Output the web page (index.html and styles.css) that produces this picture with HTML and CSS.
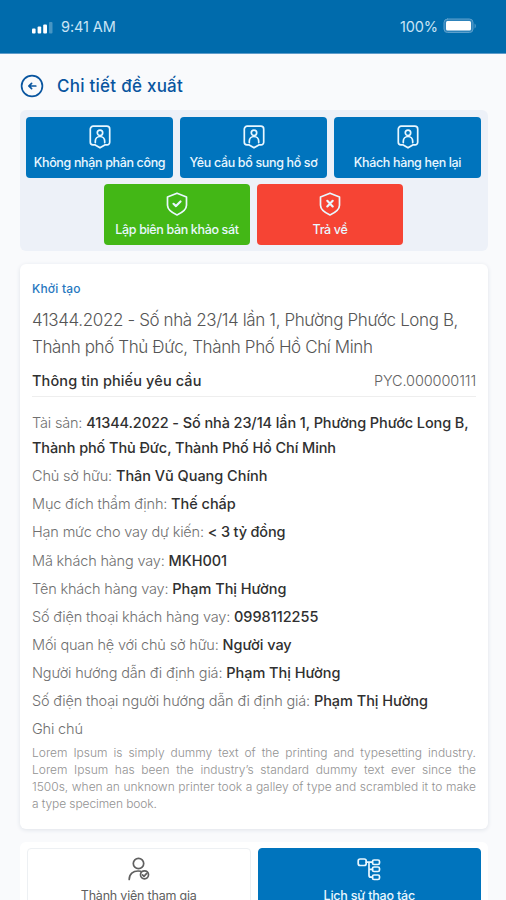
FILE: index.html
```html
<!DOCTYPE html>
<html lang="vi">
<head>
<meta charset="utf-8">
<meta name="viewport" content="width=device-width, initial-scale=1">
<title>Chi tiết đề xuất</title>
<link rel="stylesheet" href="styles.css">
</head>
<body>
<svg class="symbols" aria-hidden="true">
  <symbol id="badge" viewBox="0 0 22 24"><path d="M4.2 1.2h13.6a2.9 2.9 0 0 1 2.9 2.9v13.2a2.6 2.6 0 0 1-2.6 2.6h-2.3L11 22.8 6.200 19.900H3.900a2.600 2.600 0 0 1-2.600-2.600V4.100a2.900 2.900 0 0 1 2.900-2.900z"/><circle cx="11" cy="7.800" r="2.700"/><path d="M6.300 17.600v-1.400a4.700 4.700 0 0 1 9.400 0v1.400"/></symbol>
  <symbol id="shield-check" viewBox="0 0 22 24"><path d="M11 1.200 20.500 5v8.200c0 4.600-4.200 7.300-9.500 9.700-5.300-2.400-9.500-5.100-9.500-9.700V5z"/><path class="heavy" d="m7.500 11.800 2.500 2.300 4.500-4.600"/></symbol>
  <symbol id="shield-x" viewBox="0 0 22 24"><path d="M11 1.200 20.500 5v8.200c0 4.600-4.200 7.300-9.500 9.700-5.300-2.400-9.500-5.100-9.500-9.700V5z"/><path class="heavy" d="m8.300 8.800 5.400 5.600m0-5.600-5.400 5.600"/></symbol>
</svg>
<header class="status">
  <div class="status-group">
    <svg class="signal" viewBox="0 0 21 12"><rect x="0" y="6.500" width="3.600" height="5" rx="1"/><rect x="5.600" y="4.500" width="3.600" height="7" rx="1"/><rect x="11.200" y="2.500" width="3.800" height="9" rx="1"/><rect class="dim" x="17" y="0" width="3.500" height="11.500" rx="1"/></svg>
    <span class="clock">9:41 AM</span>
  </div>
  <div class="status-group">
    <span class="percent">100%</span>
    <svg class="battery" viewBox="0 0 34 16"><rect class="shell" x="1" y="1" width="29" height="13.500" rx="3.500"/><rect x="3" y="3" width="25" height="9.500" rx="1.500"/><path class="dim" d="M31.500 5.500c2 1 2 4 0 5z"/></svg>
  </div>
</header>
<main>
  <div class="page-title">
    <svg class="back" viewBox="0 0 24 24"><circle cx="12" cy="12" r="10.400"/><path d="M15.800 12H9m2.600-2.700L8.800 12l2.800 2.700"/></svg>
    <h1>Chi tiết đề xuất</h1>
  </div>
  <section class="actions">
    <div class="action-row">
      <button class="action"><svg><use href="#badge"/></svg><span>Không nhận phân công</span></button>
      <button class="action"><svg><use href="#badge"/></svg><span>Yêu cầu bổ sung hồ sơ</span></button>
      <button class="action"><svg><use href="#badge"/></svg><span>Khách hàng hẹn lại</span></button>
    </div>
    <div class="action-row">
      <button class="action green"><svg><use href="#shield-check"/></svg><span>Lập biên bản khảo sát</span></button>
      <button class="action red"><svg><use href="#shield-x"/></svg><span>Trả về</span></button>
    </div>
  </section>
  <article class="card">
    <div class="state">Khởi tạo</div>
    <h2>41344.2022 - Số nhà 23/14 lần 1, Phường Phước Long B,<br>Thành phố Thủ Đức, Thành Phố Hồ Chí Minh</h2>
    <div class="request"><strong>Thông tin phiếu yêu cầu</strong><span>PYC.000000111</span></div>
    <div class="details">
      <p>Tài sản: <b class="asset">41344.2022 - Số nhà 23/14 lần 1, Phường Phước Long B,<br>Thành phố Thủ Đức, Thành Phố Hồ Chí Minh</b></p>
      <p>Chủ sở hữu: <b>Thân Vũ Quang Chính</b></p>
      <p>Mục đích thẩm định: <b>Thế chấp</b></p>
      <p>Hạn mức cho vay dự kiến: <b class="amount">&lt; 3 tỷ đồng</b></p>
      <p>Mã khách hàng vay: <b>MKH001</b></p>
      <p>Tên khách hàng vay: <b>Phạm Thị Hường</b></p>
      <p>Số điện thoại khách hàng vay: <b>0998112255</b></p>
      <p>Mối quan hệ với chủ sở hữu: <b>Người vay</b></p>
      <p>Người hướng dẫn đi định giá: <b>Phạm Thị Hường</b></p>
      <p>Số điện thoại người hướng dẫn đi định giá: <b>Phạm Thị Hường</b></p>
      <p>Ghi chú</p>
    </div>
    <div class="note">
      <div>Lorem Ipsum is simply dummy text of the printing and typesetting industry.</div>
      <div>Lorem Ipsum has been the industry’s standard dummy text ever since the</div>
      <div>1500s, when an unknown printer took a galley of type and scrambled it to make</div>
      <div class="last">a type specimen book.</div>
    </div>
  </article>
  <nav class="tabs">
    <button class="tab"><svg viewBox="0 0 22 24"><circle cx="10.500" cy="6.500" r="5.200"/><path d="M1.200 22.500c0-5.500 4-8.500 8.800-8.500 1.100 0 2 .1 2.800.3"/><circle cx="16.500" cy="17.800" r="4"/><path d="m14.500 17.800 1.500 1.500 2.700-2.900"/></svg><span>Thành viên tham gia</span></button>
    <button class="tab active"><svg viewBox="0 0 24 24"><rect x="1.200" y="2" width="8" height="6.500" rx="2"/><rect x="15.500" y="3" width="7" height="4.500" rx="1.500"/><rect x="15.500" y="10" width="7" height="4.500" rx="1.500"/><rect x="15.500" y="18" width="7" height="4.500" rx="1.500"/><path d="M9.200 5.200h6.300M12 5.200v13a2 2 0 0 0 2 2h1.500M12 12.300h3.500"/></svg><span>Lịch sử thao tác</span></button>
  </nav>
</main>
</body>
</html>
```
FILE: styles.css
```css
* { box-sizing: border-box; }
html, body { height: 900px; overflow: hidden; }
body { margin: 0; background: #f9fafc; font-family: Inter, "Noto Sans", sans-serif; color: #636363; }
svg { fill: none; stroke: currentColor; stroke-width: 1.7; stroke-linecap: round; stroke-linejoin: round; flex: none; }
button { font: inherit; border: 0; padding: 0; }
.symbols { position: absolute; width: 0; height: 0; }
.heavy { stroke-width: 2.2; }
.status { height: 54px; background: #006bac; border-bottom: 1px solid #5e9cca; color: #c9e4f5; display: flex; justify-content: space-between; padding: 0 29px 0 32px; font: 400 14.5px/54px Inter, sans-serif; }
.status-group { display: flex; align-items: center; }
.status svg { fill: #fff; stroke: none; }
.status .dim { fill: #4795c3; }
.signal { width: 21px; height: 12px; margin-top: 3px; }
.battery { width: 34px; height: 16px; margin-left: 5px; margin-top: -1px; }
.status .shell { fill: #2d83bb; stroke: #5ca0cc; stroke-width: 1; }
.clock { margin-left: 8px; letter-spacing: -.1px; }
.percent { letter-spacing: -.1px; }
main { padding: 0 18px 0 20px; }
.page-title { height: 56px; display: flex; align-items: center; padding-top: 8px; color: #09559f; }
.back { width: 24px; height: 24px; }
h1 { margin: 0 0 0 13px; font-size: 17px; line-height: 24px; font-weight: 500; letter-spacing: .25px; white-space: nowrap; }
.actions { height: 141px; background: #edf1f8; border-radius: 6px; padding: 7px 7px 7px 6px; display: flex; flex-direction: column; gap: 6px; }
.action-row { display: flex; justify-content: center; gap: 7px; }
.action { width: 147px; height: 61px; background: #0074bd; color: #e9f7ff; border-radius: 4px; display: flex; flex-direction: column; align-items: center; padding-top: 8px; }
.action svg { width: 22px; height: 24px; }
.action span { font-size: 12.500px; line-height: 18px; margin-top: 5px; font-weight: 500; white-space: nowrap; letter-spacing: -.35px; }
.green, .red { width: 146px; }
.green { background: #43b716; }
.red { background: #f64434; }
.card { height: 565px; margin-top: 13px; background: #fff; border-radius: 6px; box-shadow: 0 1px 4px #dfe3e9; padding: 16px 12px 0; white-space: nowrap; }
.state { font-size: 12px; line-height: 18px; font-weight: 500; color: #2878c0; letter-spacing: .2px; }
h2 { margin: 9px 0 0; font-size: 17px; line-height: 27px; font-weight: 300; letter-spacing: -.38px; color: #555; }
.request { height: 36px; border-bottom: 1px solid #eee; display: flex; justify-content: space-between; align-items: center; font-size: 14.500px; padding: 3px 0 0; }
.request strong { font-weight: 500; color: #303030; letter-spacing: .12px; }
.request span { font-weight: 300; letter-spacing: -.1px; }
.details { padding-top: 13px; font-size: 14.500px; font-weight: 300; letter-spacing: -.17px; }
.details p { margin: 0 0 3.130px; line-height: 25px; color: #707070; }
.details b { font-weight: 500; color: #303030; letter-spacing: -.03px; }
.details .asset { letter-spacing: -.1px; }
.details .amount { letter-spacing: -.17px; }
.note { font-size: 12px; line-height: 17px; font-weight: 300; color: #929292; }
.note div { text-align-last: justify; }
.note .last { text-align-last: left; letter-spacing: -.1px; }
.tabs { height: 76px; margin-top: 13px; background: #fff; border-radius: 6px; padding: 6px 7px; display: grid; grid-template-columns: 1fr 1fr; gap: 7px; }
.tab { height: 62px; background: #fff; border: 1px solid #edf0f3; border-radius: 4px; color: #606060; display: flex; flex-direction: column; align-items: center; padding-top: 8px; font-size: 12.500px; line-height: 18px; letter-spacing: -.2px; }
.tab svg { width: 24px; height: 24px; margin-bottom: 6px; }
.tab.active { background: #0074bd; border-color: #0074bd; color: #e9f7ff; font-weight: 500; }
```
